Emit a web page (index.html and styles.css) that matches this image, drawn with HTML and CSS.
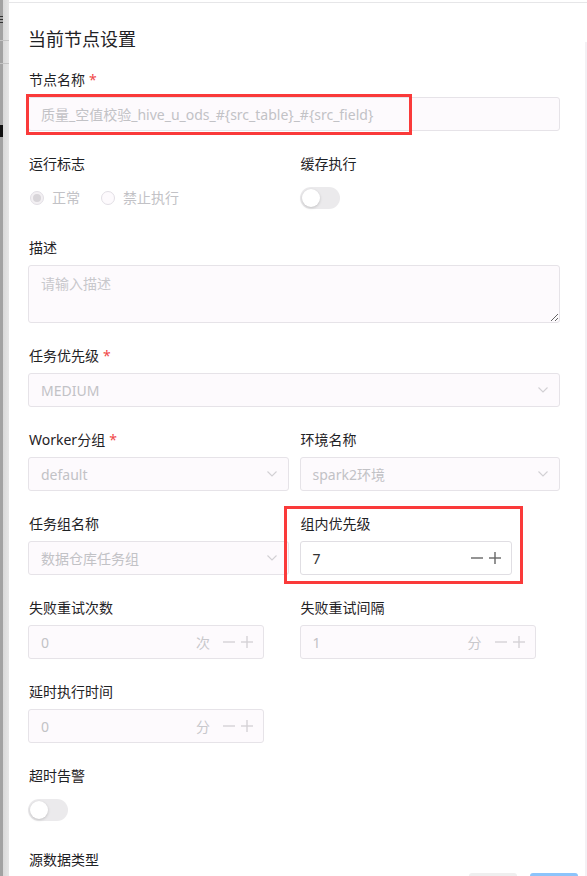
FILE: index.html
```html
<!DOCTYPE html>
<html>
<head>
  <meta charset="utf-8">
  <link rel="stylesheet" href="styles.css">
</head>
<body>
  <div class="screen">
    <div class="backdrop">
      <span class="bd-menu"></span>
      <span class="bd-line bd-line-1"></span>
      <span class="bd-line bd-line-2"></span>
      <span class="bd-mark"></span>
    </div>

    <div class="drawer">
      <div class="drawer-body">
        <div class="drawer-title">当前节点设置</div>

        <div class="form">
          <div class="form-item">
            <div class="label">节点名称<span class="req">*</span></div>
            <div class="control">
              <div class="input is-disabled">
                <span class="placeholder">质量_空值校验_hive_u_ods_#{src_table}_#{src_field}</span>
              </div>
              <div class="highlight highlight-name"></div>
            </div>
          </div>

          <div class="row">
            <div class="form-item">
              <div class="label">运行标志</div>
              <div class="control">
                <div class="radio-group">
                  <span class="radio checked"><span class="radio-dot"></span>正常</span>
                  <span class="radio"><span class="radio-dot"></span>禁止执行</span>
                </div>
              </div>
            </div>
            <div class="form-item">
              <div class="label">缓存执行</div>
              <div class="control">
                <span class="switch"><span class="switch-knob"></span></span>
              </div>
            </div>
          </div>

          <div class="form-item">
            <div class="label">描述</div>
            <div class="control control-auto">
              <textarea class="textarea" placeholder="请输入描述" readonly></textarea>
            </div>
          </div>

          <div class="form-item">
            <div class="label">任务优先级<span class="req">*</span></div>
            <div class="control">
              <div class="select is-disabled">
                <span class="placeholder">MEDIUM</span>
                <svg class="chevron" width="10" height="6" viewBox="0 0 10 6"><polyline points="0.5,0.5 5,5 9.5,0.5"/></svg>
              </div>
            </div>
          </div>

          <div class="row">
            <div class="form-item">
              <div class="label">Worker分组<span class="req">*</span></div>
              <div class="control">
                <div class="select is-disabled">
                  <span class="placeholder">default</span>
                  <svg class="chevron" width="10" height="6" viewBox="0 0 10 6"><polyline points="0.5,0.5 5,5 9.5,0.5"/></svg>
                </div>
              </div>
            </div>
            <div class="form-item">
              <div class="label">环境名称</div>
              <div class="control">
                <div class="select is-disabled">
                  <span class="placeholder">spark2环境</span>
                  <svg class="chevron" width="10" height="6" viewBox="0 0 10 6"><polyline points="0.5,0.5 5,5 9.5,0.5"/></svg>
                </div>
              </div>
            </div>
          </div>

          <div class="row">
            <div class="form-item">
              <div class="label">任务组名称</div>
              <div class="control">
                <div class="select is-disabled">
                  <span class="placeholder">数据仓库任务组</span>
                  <svg class="chevron" width="10" height="6" viewBox="0 0 10 6"><polyline points="0.5,0.5 5,5 9.5,0.5"/></svg>
                </div>
              </div>
            </div>
            <div class="form-item">
              <div class="highlight highlight-priority"></div>
              <div class="label">组内优先级</div>
              <div class="control">
                <div class="number number-short">
                  <span class="value">7</span>
                  <svg class="step" width="12" height="12" viewBox="0 0 12 12"><line x1="0" y1="6" x2="12" y2="6"/></svg>
                  <svg class="step" width="12" height="12" viewBox="0 0 12 12"><line x1="0" y1="6" x2="12" y2="6"/><line x1="6" y1="0" x2="6" y2="12"/></svg>
                </div>
              </div>
            </div>
          </div>

          <div class="row">
            <div class="form-item">
              <div class="label">失败重试次数</div>
              <div class="control">
                <div class="number is-disabled">
                  <span class="placeholder">0</span>
                  <span class="suffix">次</span>
                  <svg class="step" width="12" height="12" viewBox="0 0 12 12"><line x1="0" y1="6" x2="12" y2="6"/></svg>
                  <svg class="step" width="12" height="12" viewBox="0 0 12 12"><line x1="0" y1="6" x2="12" y2="6"/><line x1="6" y1="0" x2="6" y2="12"/></svg>
                </div>
              </div>
            </div>
            <div class="form-item">
              <div class="label">失败重试间隔</div>
              <div class="control">
                <div class="number is-disabled">
                  <span class="placeholder">1</span>
                  <span class="suffix">分</span>
                  <svg class="step" width="12" height="12" viewBox="0 0 12 12"><line x1="0" y1="6" x2="12" y2="6"/></svg>
                  <svg class="step" width="12" height="12" viewBox="0 0 12 12"><line x1="0" y1="6" x2="12" y2="6"/><line x1="6" y1="0" x2="6" y2="12"/></svg>
                </div>
              </div>
            </div>
          </div>

          <div class="row">
            <div class="form-item">
              <div class="label">延时执行时间</div>
              <div class="control">
                <div class="number is-disabled">
                  <span class="placeholder">0</span>
                  <span class="suffix">分</span>
                  <svg class="step" width="12" height="12" viewBox="0 0 12 12"><line x1="0" y1="6" x2="12" y2="6"/></svg>
                  <svg class="step" width="12" height="12" viewBox="0 0 12 12"><line x1="0" y1="6" x2="12" y2="6"/><line x1="6" y1="0" x2="6" y2="12"/></svg>
                </div>
              </div>
            </div>
          </div>

          <div class="form-item">
            <div class="label">超时告警</div>
            <div class="control">
              <span class="switch"><span class="switch-knob"></span></span>
            </div>
          </div>

          <div class="form-item">
            <div class="label">源数据类型</div>
          </div>
        </div>
      </div>

      <div class="scroll-track"></div>

      <div class="drawer-footer">
        <span class="btn btn-cancel"></span>
        <span class="btn btn-primary"></span>
      </div>
    </div>
  </div>
</body>
</html>
```

FILE: styles.css
```css
html, body {
  margin: 0;
  padding: 0;
  background: #fff;
}

body {
  font-family: "Noto Sans", "Noto Sans CJK SC", sans-serif;
  font-size: 14px;
  color: #1f2225;
}

.screen {
  display: flex;
  width: 587px;
  height: 876px;
  overflow: hidden;
}

/* dimmed page behind the drawer */
.backdrop {
  position: relative;
  width: 9px;
  flex: none;
  background: linear-gradient(to right, #a2a2a2 0, #a2a2a2 3px, #d9d9d9 3px, #e6e6e6 9px);
}

.bd-menu {
  position: absolute;
  left: 0;
  top: 16px;
  width: 3px;
  height: 7px;
  background: repeating-linear-gradient(to bottom, #333 0, #333 1px, transparent 1px, transparent 3px);
}

.bd-line {
  position: absolute;
  left: 0;
  width: 9px;
  height: 1px;
  background: #c4c4c4;
}

.bd-line-1 { top: 40px; }
.bd-line-2 { top: 63px; }

.bd-mark {
  position: absolute;
  left: 0;
  top: 125px;
  width: 3px;
  height: 12px;
  background: #111;
}

.drawer {
  position: relative;
  flex: 1;
  margin-top: 2px;
  border-top: 1px solid #e6e6e8;
  background: #fff;
}

.drawer-body {
  padding: 24px 27px 0 19px;
}

.drawer-title {
  font-size: 18px;
  line-height: 24px;
  margin-bottom: 18px;
  color: #1f2225;
}

.row {
  display: grid;
  grid-template-columns: 1fr 1fr;
  column-gap: 11px;
}

.form-item {
  position: relative;
  padding-bottom: 22px;
}

.label {
  line-height: 22px;
  margin-bottom: 6px;
  padding-left: 1px;
}

.req {
  color: #f04848;
  margin-left: 4px;
}

.control {
  position: relative;
  display: flex;
  align-items: center;
  height: 34px;
}

.control-auto {
  height: auto;
}

.placeholder {
  color: #c2c2c6;
}

.input,
.select,
.number {
  box-sizing: border-box;
  display: flex;
  align-items: center;
  height: 34px;
  width: 100%;
  padding: 0 11px 0 12px;
  border: 1px solid #e0dee3;
  border-radius: 3px;
  background: #fff;
  white-space: nowrap;
}

.is-disabled {
  background: #fdfafd;
  border-color: #e6e3e8;
}

.select .placeholder {
  flex: 1;
}

.chevron {
  fill: none;
  stroke: #d2d0d4;
  stroke-width: 1.1;
}

.textarea {
  box-sizing: border-box;
  display: block;
  width: 100%;
  height: 58px;
  margin: 0;
  padding: 7px 12px;
  border: 1px solid #e6e3e8;
  border-radius: 3px;
  background: #fdfafd;
  font: inherit;
  line-height: 22px;
  resize: vertical;
  outline: none;
}

.textarea::placeholder {
  color: #c8c8cc;
}

/* number inputs */
.number {
  width: 236px;
  padding-right: 10px;
}

.number-short {
  width: 212px;
}

.number .value,
.number .placeholder {
  flex: 1;
}

.number .value {
  color: #333;
}

.suffix {
  color: #c8c8cc;
  margin-right: 13px;
}

.step {
  flex: none;
  stroke: #666;
  stroke-width: 1.4;
}

.step + .step {
  margin-left: 6px;
}

.is-disabled .step {
  stroke: #d4d2d6;
}

/* radios */
.radio-group {
  display: flex;
  gap: 21px;
  padding-left: 2px;
}

.radio {
  display: flex;
  align-items: center;
  gap: 8px;
  color: #c2c2c6;
  line-height: 22px;
}

.radio-dot {
  box-sizing: border-box;
  display: flex;
  align-items: center;
  justify-content: center;
  width: 14px;
  height: 14px;
  border: 1px solid #e2dfe5;
  border-radius: 50%;
  background: #fdfafd;
}

.radio.checked .radio-dot {
  background: #f3f0f3;
}

.radio.checked .radio-dot::after {
  content: "";
  width: 8px;
  height: 8px;
  border-radius: 50%;
  background: #d8d5d9;
}

/* switches */
.switch {
  position: relative;
  display: inline-block;
  width: 40px;
  height: 22px;
  border-radius: 11px;
  background: #ebeaec;
}

.switch-knob {
  position: absolute;
  top: 2px;
  left: 2px;
  width: 18px;
  height: 18px;
  border-radius: 50%;
  background: #fff;
  box-shadow: 0 1px 3px rgba(0,0,0,0.18);
}

/* red annotation boxes */
.highlight {
  position: absolute;
  box-sizing: border-box;
  border: 3px solid #fa3a3a;
  pointer-events: none;
}

.highlight-name {
  left: -2px;
  top: -3px;
  width: 386px;
  height: 41px;
}

.highlight-priority {
  left: -16px;
  top: -7px;
  width: 239px;
  height: 78px;
}

.scroll-track {
  position: absolute;
  right: 0;
  top: 39px;
  bottom: 0;
  width: 2px;
  background: #f4f0f4;
}

.drawer-footer {
  position: absolute;
  right: 9px;
  top: 870px;
  display: flex;
  gap: 13px;
}

.btn {
  display: block;
  width: 48px;
  height: 32px;
  border-radius: 3px;
}

.btn-cancel {
  background: #efefef;
}

.btn-primary {
  background: #8cc4fb;
}
```
